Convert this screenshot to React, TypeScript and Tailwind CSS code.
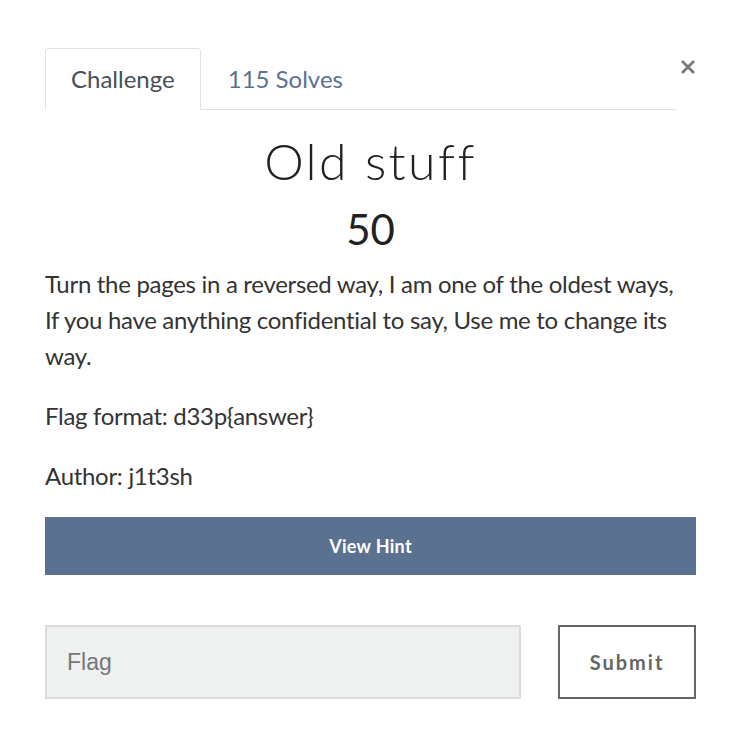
import React from "react";

export default function App() {
  return (
    <div className="w-[732px] h-[751px] bg-white pt-[48px] pl-[45px] pr-[36px] font-['Lato','Liberation_Sans',sans-serif] text-[#212529]">
      <div className="flex items-start">
        <div className="flex-1 flex h-[62px] border-b border-[#dee2e6]">
          <div className="h-[62px] px-[25px] flex items-center border border-[#dee2e6] border-b-white rounded-t-[4px] bg-white text-[24px] text-[#495057] -mb-px">
            Challenge
          </div>
          <div className="h-[62px] px-[27px] flex items-center text-[24px] text-[#5b7190]">
            115 Solves
          </div>
        </div>
        <div className="w-[20px] flex justify-end mt-[11px]">
          <svg width="16" height="16" viewBox="0 0 16 16">
            <path d="M2 2 L14 14 M14 2 L2 14" stroke="#777" strokeWidth="2.6" strokeLinecap="butt" />
          </svg>
        </div>
      </div>

      <h1 className="mt-[24px] text-center text-[50px] leading-[55px] font-light tracking-[2.4px] text-[#222]">
        Old stuff
      </h1>
      <div className="mt-[16px] text-center text-[42px] leading-[48px] text-[#222]">50</div>

      <div className="mt-[13px] text-[24px] leading-[36px] text-[#333] tracking-[-0.3px]">
        <p className="pr-[8px]">
          Turn the pages in a reversed way, I am one of the oldest ways, If you have anything confidential to say, Use me to change its way.
        </p>
        <p className="mt-[24px]">Flag format: d33p{"{"}answer{"}"}</p>
        <p className="mt-[24px]">Author: j1t3sh</p>
      </div>

      <button className="mt-[23px] w-full h-[58px] bg-[#5b7190] text-white text-[18px] font-bold tracking-[0.3px]">
        View Hint
      </button>

      <div className="mt-[50px] flex items-start justify-between">
        <div className="w-[476px] h-[74px] bg-[#eff1f0] border-2 border-[#dcdcdc] flex items-center pl-[20px] font-['Liberation_Sans',sans-serif] text-[23px] text-[#777]">
          Flag
        </div>
        <button className="w-[138px] h-[74px] bg-white border-2 border-[#666] text-[20px] font-bold tracking-[2px] text-[#666]">
          Submit
        </button>
      </div>
    </div>
  );
}
